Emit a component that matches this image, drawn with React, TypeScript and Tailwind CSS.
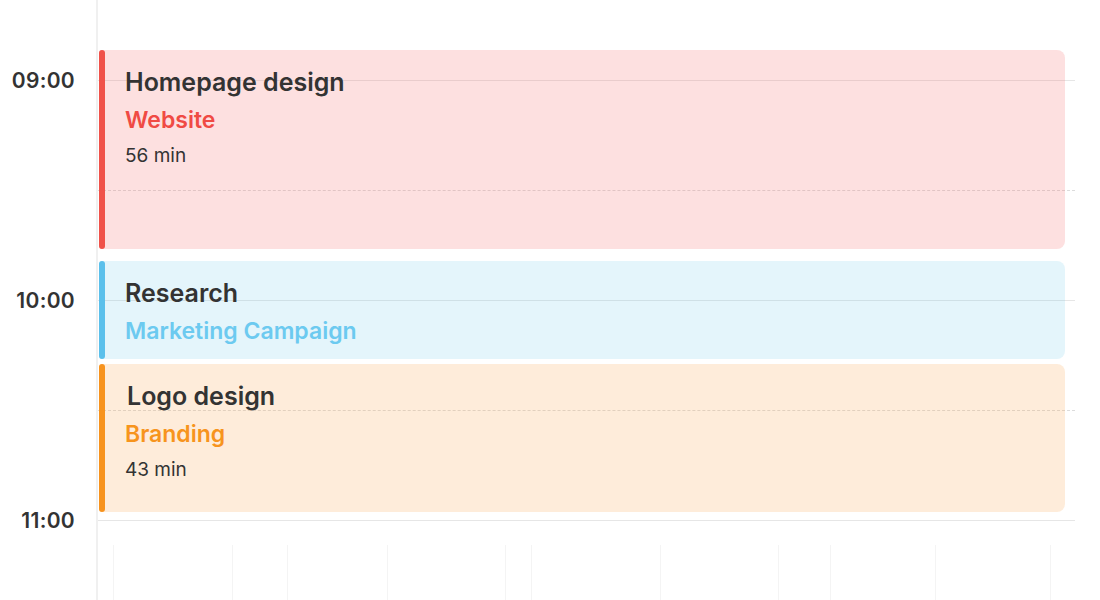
import React from "react";

type CalEvent = {
  id: string;
  title: string;
  project: string;
  duration?: string;
  top: number;
  height: number;
  stripe: string;
  bg: string;
  accent: string;
  titlePad?: string;
};

const EVENTS: CalEvent[] = [
  {
    id: "homepage",
    title: "Homepage design",
    project: "Website",
    duration: "56 min",
    top: 50,
    height: 199,
    stripe: "bg-[#f0524a]",
    bg: "bg-[rgba(246,110,110,0.21)]",
    accent: "text-[#f04a44]",
  },
  {
    id: "research",
    title: "Research",
    project: "Marketing Campaign",
    top: 261,
    height: 98,
    stripe: "bg-[#5bc0eb]",
    bg: "bg-[rgba(110,200,235,0.19)]",
    accent: "text-[#6ccaf0]",
  },
  {
    id: "logo",
    title: "Logo design",
    project: "Branding",
    duration: "43 min",
    top: 364,
    height: 148,
    stripe: "bg-[#f7931e]",
    bg: "bg-[rgba(250,160,70,0.2)]",
    accent: "text-[#f7941d]",
    titlePad: "pl-[2px]",
  },
];

const HOURS = ["09:00", "10:00", "11:00"];

// half-hour rows: solid on the hour, dashed on the half
const ROWS = ["solid", "dashed", "solid", "dashed", "solid"];

const FAINT_COLS = [113, 232, 287, 387, 505, 531, 660, 778, 830, 935, 1050];

export default function App() {
  return (
    <div className="relative h-[600px] w-[1100px] overflow-hidden bg-white font-['Inter','Noto_Sans',sans-serif] text-[#323232]">
      <div className="flex h-full">
        {/* Time labels */}
        <div className="flex w-[96px] shrink-0 flex-col pt-[69px] pr-[21px]">
          {HOURS.map((h) => (
            <div
              key={h}
              className="h-[220px] shrink-0 text-right text-[21px] font-semibold leading-[24px] tracking-[0.3px] text-[#333]"
            >
              {h}
            </div>
          ))}
        </div>

        {/* Grid */}
        <div className="relative flex-1 border-l-2 border-[#f0f0f0]">
          <div className="flex flex-col pr-[25px] pt-[80px]">
            {ROWS.map((kind, i) => (
              <div
                key={i}
                className={
                  kind === "solid"
                    ? "h-[110px] shrink-0 border-t border-[#e6e6e6]"
                    : "h-[110px] shrink-0 border-t border-dashed border-[#dcdcdc]"
                }
              />
            ))}
          </div>

          {/* faint column ghosts below the last hour */}
          <div className="absolute inset-x-0 top-[545px] h-[55px]">
            {FAINT_COLS.map((x) => (
              <div
                key={x}
                className="absolute top-0 h-full w-px bg-[#f4f4f4]"
                style={{ left: x - 98 }}
              />
            ))}
          </div>

          {/* Events */}
          {EVENTS.map((ev) => (
            <div
              key={ev.id}
              className={`absolute left-[1px] right-[35px] flex rounded-l-[3px] rounded-r-lg ${ev.bg}`}
              style={{ top: ev.top, height: ev.height }}
            >
              <div className={`w-[6px] shrink-0 rounded-full ${ev.stripe}`} />
              <div className="pl-5 pt-4">
                <div className={`text-[25px] font-semibold leading-[32px] text-[#333] ${ev.titlePad ?? ""}`}>
                  {ev.title}
                </div>
                <div className={`mt-[7px] text-[23px] font-semibold leading-[30px] ${ev.accent}`}>
                  {ev.project}
                </div>
                {ev.duration && (
                  <div className="mt-[8px] text-[19px] leading-[26px] text-[#333]">
                    {ev.duration}
                  </div>
                )}
              </div>
            </div>
          ))}
        </div>
      </div>
    </div>
  );
}
